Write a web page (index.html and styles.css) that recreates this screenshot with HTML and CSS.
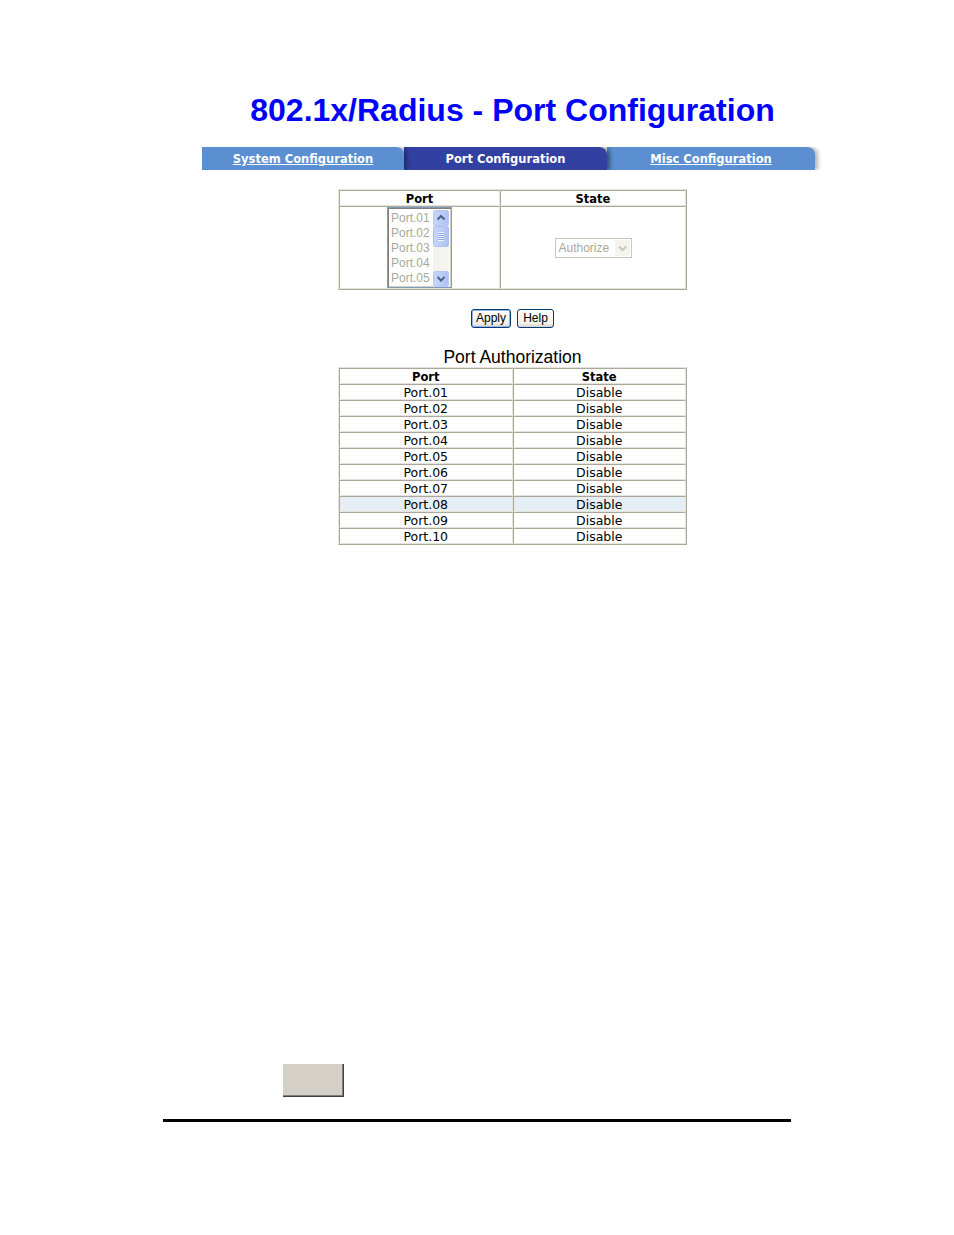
FILE: index.html
```html
<!DOCTYPE html>
<html>
<head>
<meta charset="utf-8">
<title>802.1x/Radius - Port Configuration</title>
<link rel="stylesheet" href="styles.css">
</head>
<body>
<div class="frame">
  <h1 class="title">802.1x/Radius - Port Configuration</h1>
  <nav class="tabs">
    <a class="tab tab-link tab-first" href="#">System Configuration</a>
    <span class="tab tab-active">Port Configuration</span>
    <a class="tab tab-link tab-last" href="#">Misc Configuration</a>
  </nav>

  <table class="grid config">
    <tr class="head">
      <th class="c-port">Port</th>
      <th class="c-state">State</th>
    </tr>
    <tr class="body-row">
      <td class="c-port">
        <div class="listbox">
          <ul class="list-items">
            <li>Port.01</li>
            <li>Port.02</li>
            <li>Port.03</li>
            <li>Port.04</li>
            <li>Port.05</li>
          </ul>
          <div class="scrollbar">
            <svg width="16" height="77" viewBox="0 0 16 77" xmlns="http://www.w3.org/2000/svg">
              <defs>
                <linearGradient id="btn" x1="0" y1="0" x2="1" y2="0">
                  <stop offset="0" stop-color="#c7d5f8"/>
                  <stop offset="0.5" stop-color="#bccdf7"/>
                  <stop offset="1" stop-color="#adc1f2"/>
                </linearGradient>
              </defs>
              <rect x="0" y="0" width="16" height="77" fill="#f4f3ee"/>
              <rect x="0.5" y="0.5" width="15" height="15" rx="2" fill="url(#btn)" stroke="#b7c7ef"/>
              <path d="M4.5 9.5 L8 6 L11.5 9.5" fill="none" stroke="#4d6185" stroke-width="2"/>
              <rect x="0.5" y="16.5" width="15" height="20" rx="2" fill="url(#btn)" stroke="#a9bdee"/>
              <path d="M5 22.5h6M5 24.5h6M5 26.5h6M5 28.5h6M5 30.5h6" stroke="#eef3fd" stroke-width="1"/>
              <path d="M5 23.5h6M5 25.5h6M5 27.5h6M5 29.5h6" stroke="#8ca6e0" stroke-width="1"/>
              <rect x="0.5" y="61.5" width="15" height="15" rx="2" fill="url(#btn)" stroke="#b7c7ef"/>
              <path d="M4.5 67 L8 70.5 L11.5 67" fill="none" stroke="#4d6185" stroke-width="2"/>
            </svg>
          </div>
        </div>
      </td>
      <td class="c-state">
        <div class="select">
          <span class="select-text">Authorize</span>
          <span class="select-btn">
            <svg width="15" height="16" viewBox="0 0 15 16" xmlns="http://www.w3.org/2000/svg">
              <path d="M4 6.5 L7.5 10 L11 6.5" fill="none" stroke="#c9c7ba" stroke-width="2"/>
            </svg>
          </span>
        </div>
      </td>
    </tr>
  </table>

  <div class="buttons">
    <button class="btn btn-apply" type="button">Apply</button>
    <button class="btn btn-help" type="button">Help</button>
  </div>

  <h2 class="subtitle">Port Authorization</h2>

  <table class="grid auth">
    <tr class="head"><th>Port</th><th>State</th></tr>
    <tr><td>Port.01</td><td>Disable</td></tr>
    <tr><td>Port.02</td><td>Disable</td></tr>
    <tr><td>Port.03</td><td>Disable</td></tr>
    <tr><td>Port.04</td><td>Disable</td></tr>
    <tr><td>Port.05</td><td>Disable</td></tr>
    <tr><td>Port.06</td><td>Disable</td></tr>
    <tr><td>Port.07</td><td>Disable</td></tr>
    <tr class="hover"><td>Port.08</td><td>Disable</td></tr>
    <tr><td>Port.09</td><td>Disable</td></tr>
    <tr><td>Port.10</td><td>Disable</td></tr>
  </table>
</div>

<div class="footer">
  <div class="graybox"></div>
  <div class="rule"></div>
</div>
</body>
</html>
```

FILE: styles.css
```css
html, body {
  margin: 0;
  padding: 0;
  background: #ffffff;
}

body {
  font-family: "DejaVu Sans", Verdana, sans-serif;
  color: #000000;
}

.frame {
  margin-left: 202px;
  width: 621px;
  padding-top: 92px;
}

.title {
  margin: 0;
  font-family: "Liberation Sans", Arial, sans-serif;
  font-weight: bold;
  font-size: 32px;
  line-height: 37px;
  color: #0000ff;
  text-align: center;
}

/* Tabs */
.tabs {
  display: flex;
  margin-top: 18px;
  height: 23px;
  width: 621px;
  overflow: hidden;
}

.tab {
  display: block;
  height: 23px;
  line-height: 24px;
  text-align: center;
  font-family: "DejaVu Sans", Verdana, sans-serif;
  font-weight: bold;
  font-size: 11.5px;
  color: #ffffff;
  border-top-right-radius: 8px;
  position: relative;
  box-sizing: border-box;
}

.tab-link {
  background: #5b8fd2;
  text-decoration: underline;
}

.tab-first {
  width: 202px;
  z-index: 3;
  box-shadow: 3px 0 4px rgba(0, 0, 0, 0.35);
}

.tab-active {
  width: 203px;
  background: #3240a2;
  z-index: 2;
  box-shadow: 3px 0 4px rgba(0, 0, 0, 0.45);
}

.tab-last {
  width: 208px;
  z-index: 1;
  box-shadow: 3px 0 4px rgba(0, 0, 0, 0.3);
}

/* Tables */
.grid {
  border-collapse: separate;
  border-spacing: 0;
  border: 1px solid;
  border-color: #e6e3da #aca899 #aca899 #e6e3da;
  margin-left: 136px;
  width: 349px;
  table-layout: fixed;
}

.grid th,
.grid td {
  border: 1px solid;
  border-color: #aca899 #e6e3da #e6e3da #aca899;
  padding: 1px 0 0 0;
  text-align: center;
}

.grid th {
  font-weight: bold;
  font-size: 11.5px;
  height: 12px;
  line-height: 12px;
  padding-top: 2px;
}

.grid td {
  font-size: 12.5px;
  height: 13px;
  line-height: 13px;
}

.config {
  margin-top: 19px;
}

.config .c-port {
  width: 159px;
}

.config .c-state {
  width: auto;
}

.config .body-row td {
  height: 80px;
  padding: 0;
  vertical-align: middle;
}

.auth tr.hover td {
  background: #e6eef5;
}

/* Listbox */
.listbox {
  display: flex;
  width: 65px;
  height: 81px;
  margin: 0 auto;
  box-sizing: border-box;
  border: 1px solid #7f9db9;
  box-shadow: inset 1px 1px 0 #808080, inset -1px -1px 0 #d4d0c8;
  padding: 2px 2px 2px 3px;
  background: #ffffff;
}

.list-items {
  list-style: none;
  margin: 0;
  padding: 1px 0 0 0;
  flex: 1;
  text-align: left;
}

.list-items li {
  font-family: "Liberation Sans", Tahoma, sans-serif;
  font-size: 12px;
  line-height: 15px;
  color: #aca899;
  white-space: nowrap;
}

.scrollbar {
  width: 16px;
  height: 77px;
  flex: none;
}

.scrollbar svg {
  display: block;
}

/* Select */
.select {
  display: flex;
  width: 77px;
  height: 20px;
  margin: 0 auto;
  box-sizing: border-box;
  border: 1px solid #c9c7ba;
  background: #ffffff;
  padding: 1px;
}

.select-text {
  flex: 1;
  font-family: "Liberation Sans", Tahoma, sans-serif;
  font-size: 12px;
  line-height: 16px;
  color: #aca899;
  text-align: left;
  padding-left: 2px;
}

.select-btn {
  width: 15px;
  height: 16px;
  background: #f4f3ee;
  border: 0;
}

.select-btn svg {
  display: block;
}

/* Buttons */
.buttons {
  display: flex;
  justify-content: center;
  gap: 6px;
  margin-top: 19px;
}

.btn {
  font-family: "Liberation Sans", Tahoma, sans-serif;
  font-size: 12px;
  height: 19px;
  line-height: 15px;
  padding: 0;
  border: 1px solid #003c74;
  border-radius: 3px;
  background: linear-gradient(#ffffff, #f0f0ea 80%, #d6d0c5);
  color: #000000;
  box-sizing: border-box;
}

.btn-apply {
  width: 40px;
  box-shadow: inset 0 0 0 1px #93b5ea;
}

.btn-help {
  width: 37px;
}

/* Subtitle */
.subtitle {
  margin: 20px 0 0 0;
  font-family: "Liberation Sans", Arial, sans-serif;
  font-weight: normal;
  font-size: 17.5px;
  line-height: 19px;
  text-align: center;
}

/* Footer */
.footer {
  margin-top: 519px;
}

.graybox {
  margin-left: 283px;
  width: 61px;
  height: 33px;
  box-sizing: border-box;
  background: #d4d0c8;
  border-right: 1px solid #404040;
  border-bottom: 1px solid #404040;
  box-shadow: inset -1px -1px 0 #808080;
}

.rule {
  margin-left: 163px;
  margin-top: 22px;
  width: 628px;
  height: 3px;
  background: #000000;
}
```
